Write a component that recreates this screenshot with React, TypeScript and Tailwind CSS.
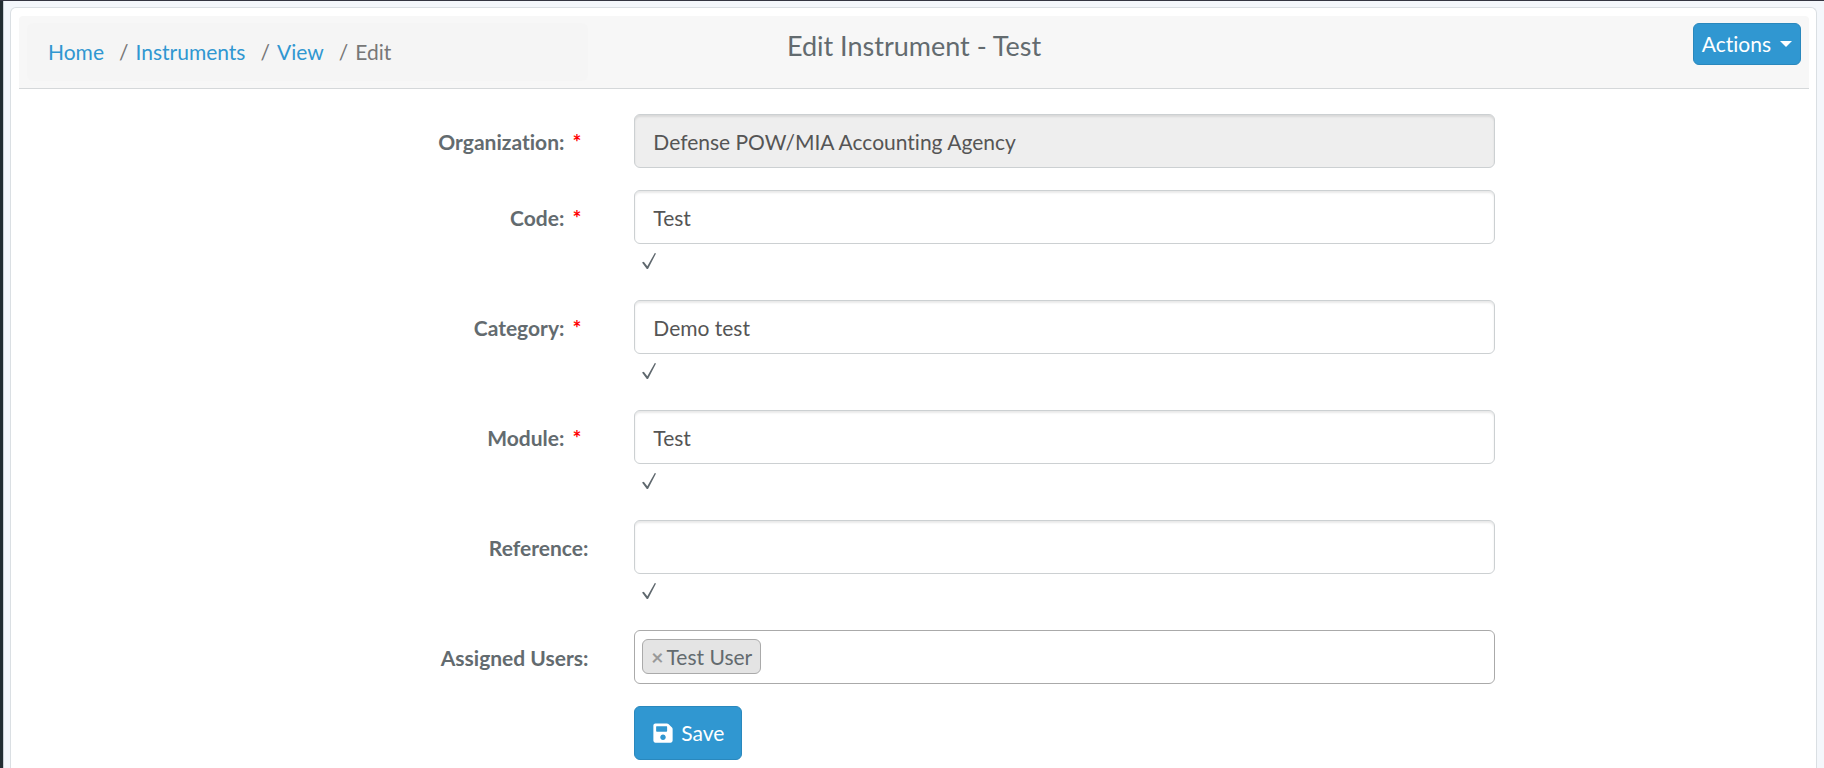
import React from "react";
import { FaSave } from "react-icons/fa";

const inputClass =
  "block h-[54px] w-full rounded-md border border-[#ccd0d2] px-[18px] text-[21px] text-[#555555] shadow-[inset_0_2px_2px_rgba(0,0,0,0.09)] outline-none";

function Row({ id, label, required, children }: { id?: string; label?: string; required?: boolean; children: React.ReactNode }) {
  return (
    <div className="-mx-3 mb-[22px] grid grid-cols-12">
      <div className="col-span-4 px-[23px] pt-[13px] text-right">
        {label && (
          <label htmlFor={id} className="font-bold">
            {label}
            {required && <span className="ml-2 mr-[7px] text-[#ff0000]">*</span>}
          </label>
        )}
      </div>
      <div className="col-span-6 px-[23px]">{children}</div>
    </div>
  );
}

function Check() {
  return (
    <div className="flex h-[34px] items-center pl-2">
      <svg viewBox="0 0 14 16" className="h-4 w-[14px]" role="img" aria-label="Valid">
        <path d="M0 9.6 L1.8 8.8 L5.3 13.2 L12.8 0 L14 0.4 L6 16 L4.8 16 Z" fill="#5f686e" />
      </svg>
    </div>
  );
}

function Crumb({ children }: { children: string }) {
  return (
    <li className="flex">
      <a href="#" className="text-[#3097d1]">{children}</a>
      <span className="ml-[15px] mr-[7px] text-[#777777]">/</span>
    </li>
  );
}

export default function App() {
  return (
    <div className="flex min-h-screen border-t border-[#343541] bg-[#f4f7fb] font-['Lato',sans-serif] text-[21px] leading-[30px] text-[#636b6f] [font-variant-ligatures:none]">
      <aside className="w-1 shrink-0 border-r border-[#c9d0d6] bg-[#222d32]" />
      <main className="flex min-w-0 grow flex-col pl-[6px] pr-[7px] pt-[6px]">
        <div className="grow rounded-t-md border border-b-0 border-[#dadfe3] bg-white pl-2 pr-[7px] pt-2">
          <header className="mb-[25px] grid h-[73px] grid-cols-3 items-start rounded-t-sm border-b border-[#d5d8da] bg-[#f7f7f7] px-2 pt-[7px]">
            <nav aria-label="Breadcrumb" className="mr-[30px] rounded-md bg-[#f5f5f5] px-[21px] py-[14px]">
              <ol className="flex">
                <Crumb>Home</Crumb>
                <Crumb>Instruments</Crumb>
                <Crumb>View</Crumb>
                <li className="text-[#777777]">Edit</li>
              </ol>
            </nav>
            <h1 className="pt-1 text-center text-[27px] leading-[38px]">Edit Instrument - Test</h1>
            <button className="flex h-[42px] items-center gap-[9px] justify-self-end rounded-md border border-[#2a88bd] bg-[#3097d1] px-2 text-white">
              Actions
              <span className="border-x-[6px] border-t-[6px] border-x-transparent border-t-white" />
            </button>
          </header>
          <form className="pr-px">
            <Row id="organization" label="Organization:" required>
              <input id="organization" readOnly defaultValue="Defense POW/MIA Accounting Agency" className={inputClass + " bg-[#eeeeee]"} />
            </Row>
            <Row id="code" label="Code:" required>
              <input id="code" defaultValue="Test" className={inputClass} />
              <Check />
            </Row>
            <Row id="category" label="Category:" required>
              <input id="category" defaultValue="Demo test" className={inputClass} />
              <Check />
            </Row>
            <Row id="module" label="Module:" required>
              <input id="module" defaultValue="Test" className={inputClass} />
              <Check />
            </Row>
            <Row id="reference" label="Reference:">
              <input id="reference" className={inputClass} />
              <Check />
            </Row>
            <Row id="users" label="Assigned Users:">
              <div className="flex h-[54px] items-start rounded-md border border-[#aaaaaa] bg-white px-[7px] pt-2">
                <span className="flex h-[35px] items-center rounded-md border border-[#aaaaaa] bg-[#e4e4e4] px-2">
                  <button type="button" aria-label="Remove Test User" className="mr-[3px] font-bold text-[#999999]">×</button>
                  Test User
                </span>
                <input id="users" className="min-w-0 grow outline-none" />
              </div>
            </Row>
            <div className="-mx-3 grid grid-cols-12 pb-[6px]">
              <div className="col-span-6 col-start-5 px-[23px]">
                <button type="button" className="flex h-[54px] items-center gap-[7px] rounded-md border border-[#2a88bd] bg-[#3097d1] px-[17px] text-white">
                  <FaSave className="size-[22px]" />
                  Save
                </button>
              </div>
            </div>
          </form>
        </div>
      </main>
    </div>
  );
}
